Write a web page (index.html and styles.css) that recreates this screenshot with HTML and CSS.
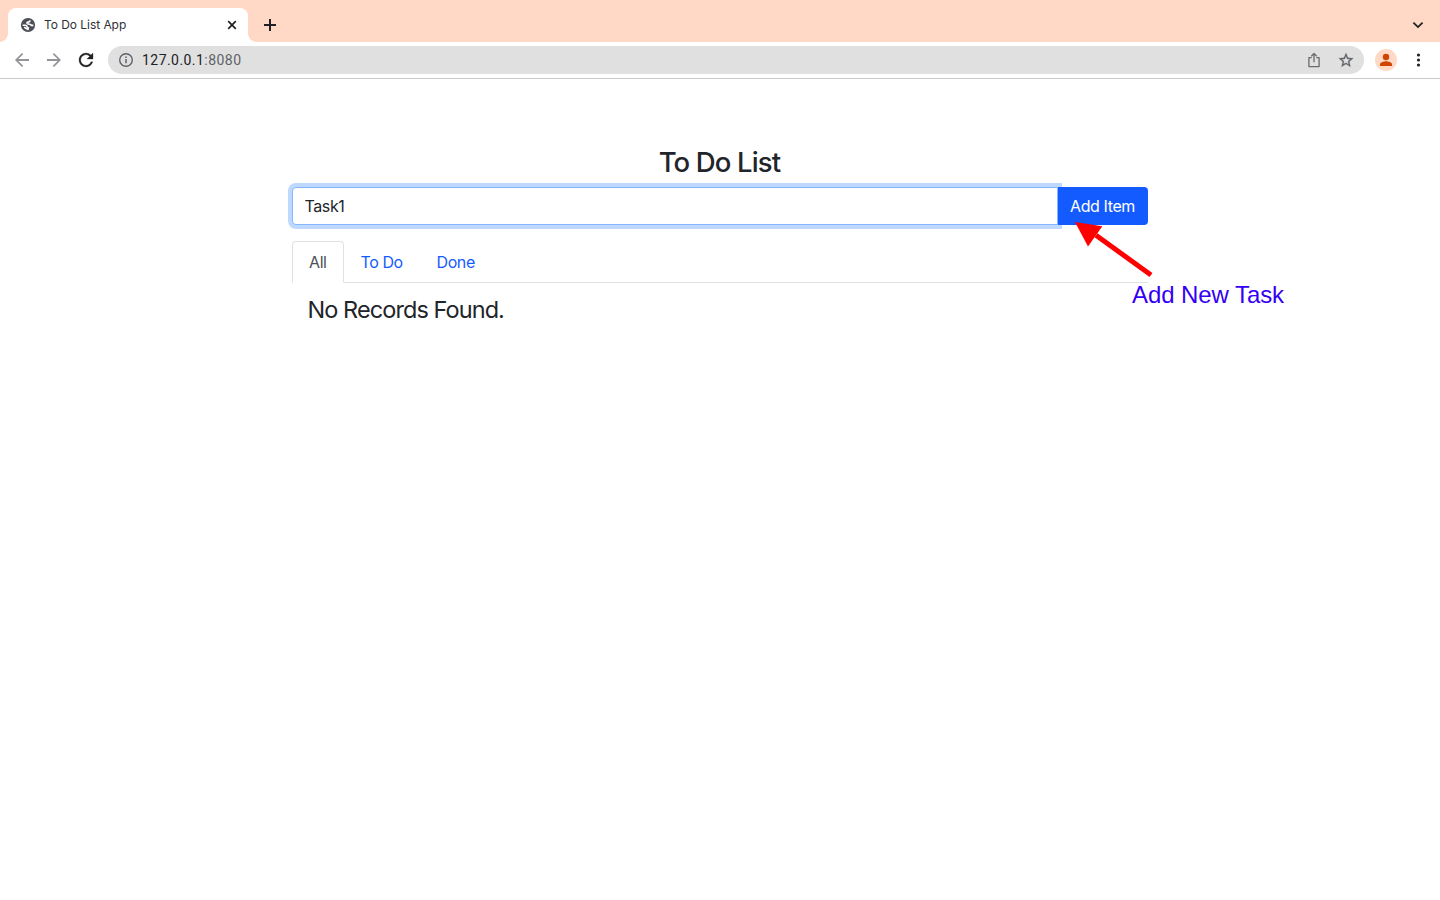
FILE: index.html
```html
<!DOCTYPE html>
<html lang="en">
<head>
<meta charset="utf-8">
<title>To Do List App</title>
<link rel="stylesheet" href="styles.css">
</head>
<body>
<header class="browser">
  <div class="tabstrip">
    <div class="tab">
      <svg class="globe" width="16" height="16" viewBox="0 0 16 16"><circle cx="8" cy="8" r="7.1" fill="#4b4e57"/><path d="M10.2 3.3Q9.9 4.8 8 5.1Q6.4 5.6 7.2 6.6Q8 7.2 9.6 7.3Q11 7.6 11.3 8.4H13.4M2.6 8.3H5.2Q7 8.5 7.1 9.8Q7.2 10.8 8.3 11Q8.3 12 7.6 13.2M4.2 10.2L7 12.2" fill="none" stroke="#fff" stroke-width="1.6"/></svg>
      <span class="tab-title">To Do List App</span>
      <svg class="tab-close" width="10" height="10" viewBox="0 0 10 10"><path d="M1.2 1.2l7.6 7.6M8.8 1.2L1.2 8.8" stroke="#202124" stroke-width="1.7"/></svg>
    </div>
    <svg class="new-tab" width="12" height="12" viewBox="0 0 12 12"><path d="M6 0v12M0 6h12" stroke="#202124" stroke-width="2"/></svg>
    <svg class="chevron" width="12" height="8" viewBox="0 0 12 8"><path d="M1.4 1.6L6 6.1l4.6-4.5" fill="none" stroke="#202124" stroke-width="1.8"/></svg>
  </div>
  <div class="toolbar">
    <svg class="nav" viewBox="-.57 -.57 25.14 25.14" fill="#929497"><path d="M20 11H7.83l5.59-5.59L12 4l-8 8 8 8 1.41-1.41L7.83 13H20v-2z"/></svg>
    <svg class="nav" viewBox="-.57 -.57 25.14 25.14" fill="#929497"><path d="M4 11h12.17l-5.59-5.59L12 4l8 8-8 8-1.41-1.41L16.17 13H4z"/></svg>
    <svg class="nav" viewBox="-.57 -.57 25.14 25.14" fill="#202124" stroke="#202124" stroke-width=".3"><path d="M17.65 6.35C16.2 4.9 14.21 4 12 4c-4.42 0-7.99 3.58-7.99 8s3.57 8 7.99 8c3.73 0 6.84-2.55 7.73-6h-2.08c-.82 2.33-3.04 4-5.65 4-3.31 0-6-2.69-6-6s2.69-6 6-6c1.66 0 3.14.69 4.22 1.78L13 11h7V4l-2.35 2.35z"/></svg>
    <div class="omnibox">
      <svg width="16" height="16" viewBox="0 0 16 16"><circle cx="8" cy="8" r="6.3" fill="none" stroke="#5f6368" stroke-width="1.4"/><path d="M8 7.1v4.2M8 4.5v1.5" stroke="#5f6368" stroke-width="1.5"/></svg>
      <span class="url">127.0.0.1<span class="port">:8080</span></span>
      <svg class="share" width="16" height="16" viewBox="0 0 16 16"><path d="M5.7 5.7H2.9v8.9h10.2V5.7h-2.8M8 10.2V1.8M5.3 4.2L8 1.5l2.7 2.7" fill="none" stroke="#696b6e" stroke-width="1.3" stroke-linejoin="round"/></svg>
      <svg class="star" width="16" height="16" viewBox=".9 .5 22.2 22.2" fill="#5f6368"><path d="M22 9.24l-7.19-.62L12 2 9.19 8.63 2 9.24l5.46 4.73L5.82 21 12 17.27 18.18 21l-1.63-7.03L22 9.24zM12 15.4l-3.76 2.27 1-4.28-3.32-2.88 4.38-.38L12 6.1l1.71 4.04 4.38.38-3.32 2.88 1 4.28L12 15.4z" stroke="#5f6368" stroke-width=".4"/></svg>
    </div>
    <div class="avatar"><svg width="22" height="22" viewBox="0 0 22 22" fill="#cf4500"><circle cx="11" cy="8" r="3.2"/><path d="M5 17v-1.7c0-2.1 4-3.1 6-3.1s6 1 6 3.1V17z"/></svg></div>
    <svg class="menu" width="5" height="14" viewBox="0 0 5 14" fill="#202124"><circle cx="2.5" cy="2" r="1.6"/><circle cx="2.5" cy="7" r="1.6"/><circle cx="2.5" cy="12" r="1.6"/></svg>
  </div>
</header>
<main class="page">
  <h1 class="heading">To Do List</h1>
  <div class="input-group">
    <input class="task-input" type="text" value="Task1">
    <button class="add-button">Add Item</button>
  </div>
  <nav class="tabs">
    <a class="tabs-item tabs-item-active">All</a>
    <a class="tabs-item tabs-todo">To Do</a>
    <a class="tabs-item tabs-done">Done</a>
  </nav>
  <p class="empty">No Records Found.</p>
  <svg class="arrow" width="80" height="60" viewBox="0 0 80 60"><path d="M76 53L21 13.3" stroke="#f00" stroke-width="5"/><path d="M0 0L27.3 4.2 13 24.4z" fill="#f00"/></svg>
  <div class="note">Add New Task</div>
</main>
</body>
</html>
```

FILE: styles.css
```css
* { box-sizing: border-box; }
body { margin: 0; height: 900px; overflow: hidden; background: #fff; color: #212529; font-family: Inter, "Liberation Sans", sans-serif; }
svg { display: block; flex: none; }

.tabstrip { display: flex; height: 42px; padding: 8px 17px 0 8px; background: #ffd9c6; }
.tab { position: relative; display: flex; align-items: center; width: 240px; padding: 0 11px 0 12px; background: #fff; border-radius: 8px 8px 0 0; }
.tab::before, .tab::after { content: ""; position: absolute; bottom: 0; width: 8px; height: 8px; }
.tab::before { left: -8px; background: radial-gradient(circle at 0 0, #ffd9c6 7.5px, #fff 8px); }
.tab::after { right: -8px; background: radial-gradient(circle at 100% 0, #ffd9c6 7.5px, #fff 8px); }
.tab-title { flex: 1; margin-left: 8px; font-size: 12px; line-height: 16px; letter-spacing: -0.05px; color: #303136; }
.new-tab { margin: 11px 0 0 16px; }
.chevron { margin: 13px -1px 0 auto; }

.toolbar { display: flex; align-items: center; height: 37px; padding: 0 19px 0 11px; border-bottom: 1px solid #c9c9cb; }
.nav { width: 22px; height: 22px; margin-right: 10px; }
.omnibox { display: flex; align-items: center; flex: 1; height: 28px; margin-left: 1px; padding: 0 10px; border-radius: 14px; background: #e0e0e0; }
.url { margin-left: 8px; font: 14px/20px Roboto, sans-serif; letter-spacing: 0.45px; color: #202124; }
.port { color: #5f6368; }
.share { margin: 0 16px 0 auto; }
.avatar { width: 22px; height: 22px; margin-left: 11px; border-radius: 50%; background: #ffd9c6; }
.menu { margin-left: 19px; }

.page { position: relative; width: 856px; margin: 0 auto; padding-top: 66px; }
.heading { margin: 0 1px 8px 0; text-align: center; font-size: 27.5px; font-weight: 500; line-height: 34px; letter-spacing: -0.85px; }
.input-group { display: flex; height: 38px; }
.task-input { width: 766px; height: 38px; padding: 0 11.5px; border: 1px solid #86b7fe; border-radius: 4px 0 0 4px; outline: 0; background: #fff; box-shadow: 0 0 0 4px #bfd8ff; font: 16px/24px Inter, sans-serif; letter-spacing: -0.4px; color: #212529; }
.add-button { position: relative; flex: 1; height: 38px; padding: 0 1px 0 0; border: 0; border-radius: 0 4px 4px 0; background: #145bff; color: #fff; font: 430 16px/24px Inter, sans-serif; letter-spacing: -0.4px; }
.tabs { display: flex; height: 42px; margin-top: 16px; border-bottom: 1px solid #dee2e6; }
.tabs-item { height: 42px; padding: 9px 16.5px; font-size: 16px; font-weight: 430; line-height: 24px; letter-spacing: -0.4px; white-space: nowrap; color: #145bff; }
.tabs-item-active { width: 52px; padding: 8px 16px; border: 1px solid #dee2e6; border-bottom-color: #fff; border-radius: 4px 4px 0 0; color: #495057; }
.tabs-todo { width: 76px; }
.empty { margin: 12px 15.5px 0; font-size: 23.5px; line-height: 29px; letter-spacing: -0.93px; }
.arrow { position: absolute; left: 783px; top: 143px; }
.note { position: absolute; left: 840px; top: 202px; font: 24px/28px "Liberation Sans", sans-serif; letter-spacing: -0.08px; white-space: nowrap; color: #3300f5; }
```
